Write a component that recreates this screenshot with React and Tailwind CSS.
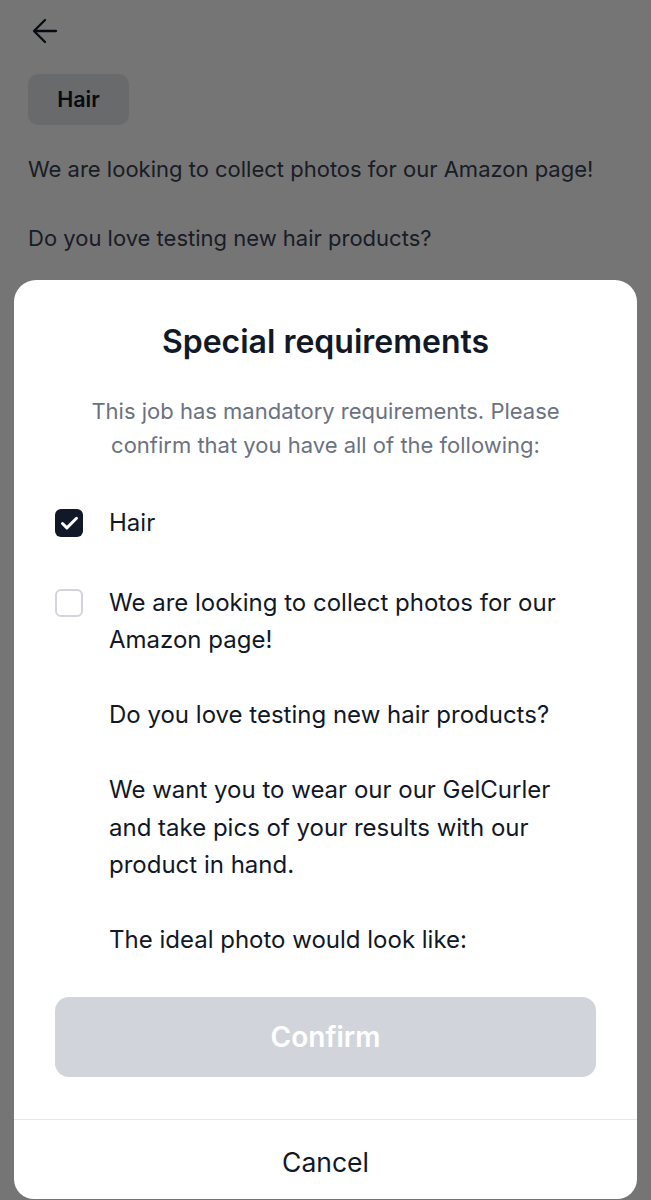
import { Check } from "lucide-react";

const font = { fontFamily: "Inter, 'Noto Sans', sans-serif" };

const description = `We are looking to collect photos for our Amazon page!

Do you love testing new hair products?

We want you to wear our our GelCurler and take pics of your results with our product in hand.

The ideal photo would look like:`;

function Checkbox({ checked }) {
  if (checked) {
    return (
      <span className="w-7 h-7 shrink-0 rounded-[6px] bg-[#111827] flex items-center justify-center">
        <Check className="w-[21px] h-[21px] text-white" strokeWidth={3.4} />
      </span>
    );
  }
  return <span className="block w-7 h-7 shrink-0 rounded-[6px] border-2 border-[#d1d5db] bg-white" />;
}

export default function App() {
  return (
    <div className="relative w-[651px] h-[1200px] overflow-hidden bg-white text-[#111827]" style={font}>
      {/* page behind the sheet */}
      <div className="px-7 pt-[18px]">
        <svg width="26" height="26" viewBox="0 0 26 26" fill="none" stroke="currentColor" strokeWidth="2.3" strokeLinecap="round" strokeLinejoin="round" className="ml-[4px]">
          <path d="M24 13H3" />
          <path d="M13 2L2 13l11 11" />
        </svg>
        <div className="mt-[30px] w-[101px] h-[51px] rounded-[10px] bg-[#e5e7eb] flex items-center justify-center text-[21.5px] font-semibold">
          Hair
        </div>
        <p className="mt-[26px] text-[22px] leading-[36px] text-[#374151]">We are looking to collect photos for our Amazon page!</p>
        <p className="mt-[33px] text-[22px] leading-[36px] text-[#374151]">Do you love testing new hair products?</p>
      </div>

      {/* overlay */}
      <div className="absolute inset-0 bg-black/[0.54] flex flex-col justify-end px-[14px]">
        <div className="h-[919px] rounded-t-[22px] rounded-b-[20px] bg-white flex flex-col">
          <h2 className="mt-[42px] text-center text-[32px] font-semibold leading-[40px] text-[#111827]">Special requirements</h2>
          <p className="mt-[32px] px-[60px] text-center text-[22px] leading-[34px] text-[#6b7280]">
            This job has mandatory requirements. Please confirm that you have all of the following:
          </p>

          <div className="mt-[42px] px-[41px] flex flex-col gap-[42px]">
            <div className="flex items-start gap-[26px]">
              <div className="pt-[5px] shrink-0"><Checkbox checked /></div>
              <span className="text-[24px] leading-[37.5px]">Hair</span>
            </div>
            <div className="flex items-start gap-[26px]">
              <div className="pt-[5px] shrink-0"><Checkbox /></div>
              <span className="text-[24px] leading-[37.5px] whitespace-pre-line pr-[16px]">{description}</span>
            </div>
          </div>

          <div className="mt-[38px] px-[41px]">
            <button type="button" disabled className="w-full h-[80px] rounded-[14px] bg-[#d1d5db] text-white text-[28px] font-semibold">
              Confirm
            </button>
          </div>

          <div className="mt-[42px] border-t border-[#e5e7eb] flex-1 flex items-center justify-center">
            <span className="text-[26.5px] text-[#111827] pt-[8px]">Cancel</span>
          </div>
        </div>
        <div className="h-[1px]" />
      </div>
    </div>
  );
}
